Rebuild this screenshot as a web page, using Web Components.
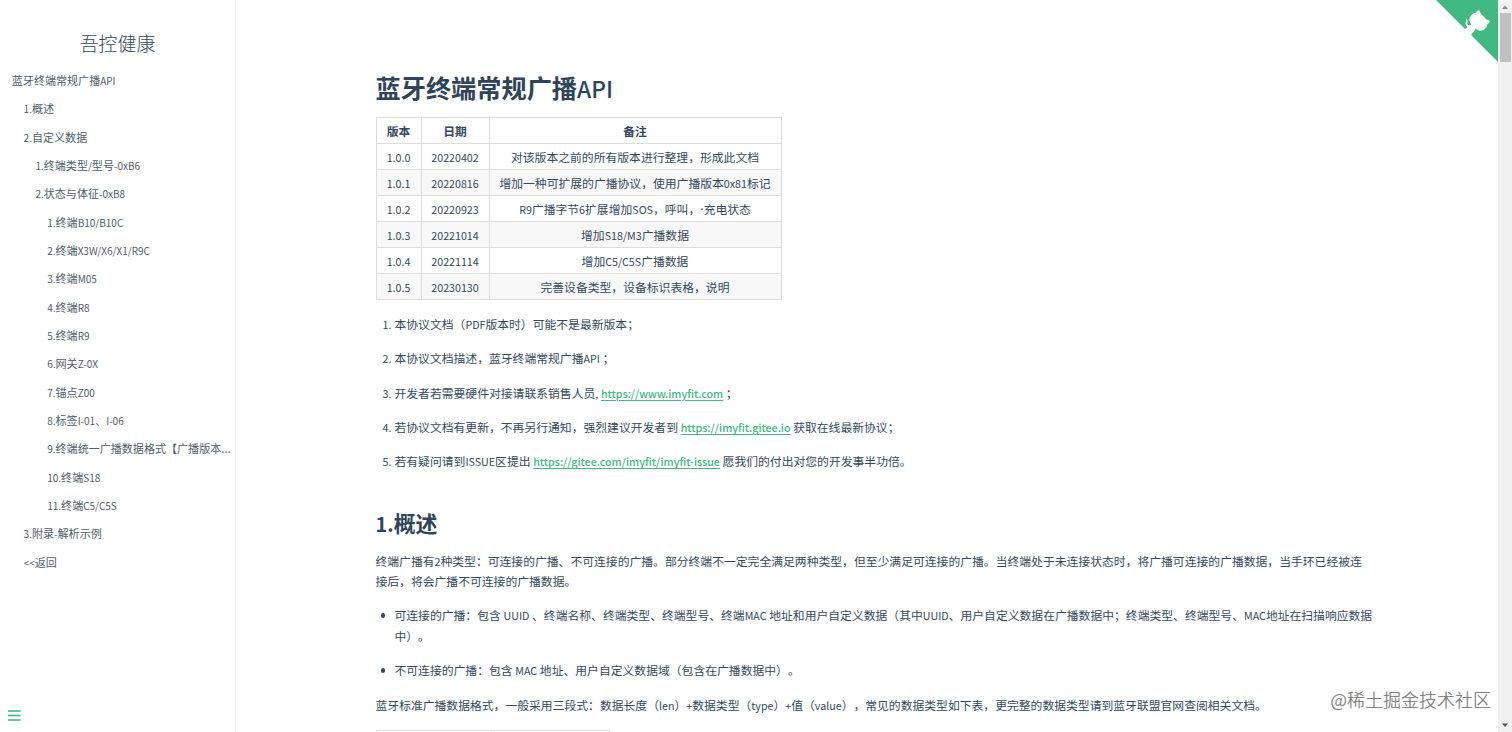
<!DOCTYPE html>
<html lang="zh-CN">
<head>
<meta charset="utf-8">
<title>蓝牙终端常规广播API</title>
<style>
html,body{margin:0;height:100%;overflow:hidden;background:#fff}
body{font-family:"Noto Sans CJK SC","Open Sans",sans-serif;text-spacing-trim:space-all;text-autospace:no-autospace;color:#34495e;font-size:11.82px}
</style>
</head>
<body>
<docs-app></docs-app>
<script>
// Western runs are set slightly smaller than the Chinese text around them.
function wrapLatin(root){
  const walker=document.createTreeWalker(root,NodeFilter.SHOW_TEXT),nodes=[];
  while(walker.nextNode())nodes.push(walker.currentNode);
  for(const n of nodes){
    const tag=n.parentNode.localName;
    if(tag==='style'||tag==='latin-run'||tag==='water-mark'||!n.data.trim())continue;
    const parts=n.data.split(/([!-~](?:[ -~]*[!-~])?|[·…])/);
    if(parts.length<2)continue;
    const frag=document.createDocumentFragment();
    parts.forEach((s,i)=>{
      if(!s)return;
      if(i%2){
        const e=document.createElement('latin-run');
        if(/[·…]/.test(s))e.setAttribute('symbol','');
        e.textContent=s;frag.append(e);
      }else frag.append(s);
    });
    n.replaceWith(frag);
  }
}
const define=(name,html,setup)=>customElements.define(name,class extends HTMLElement{
  connectedCallback(){
    if(this.shadowRoot)return;
    const t=document.createElement('template');
    t.innerHTML=html;
    wrapLatin(t.content);
    this.attachShadow({mode:'open'}).appendChild(t.content.cloneNode(true));
    if(setup)setup(this,this.shadowRoot);
  }
});

define('latin-run',`<style>
:host{display:inline;font-size:.905em;line-height:0}
:host([symbol]){font-family:"Open Sans",sans-serif;font-size:1.1em}
</style><slot></slot>`);

define('nav-item',`<style>
:host{display:block;height:28.34px;line-height:28.34px;font-size:11.05px;color:#505d6b;padding-left:calc(11.8px * var(--level,1));box-sizing:border-box}
a{display:block;overflow:hidden;white-space:nowrap}
</style><a><slot></slot></a>`,(el)=>el.style.setProperty('--level',el.getAttribute('level')));

define('menu-toggle',`<style>
:host{position:absolute;left:8px;bottom:11px;width:13px;height:11px}
svg{display:block}
</style><svg width="13" height="11" fill="#42b983"><rect width="12.6" height="1.6" y=".2"/><rect width="12.6" height="1.6" y="4.7"/><rect width="12.6" height="1.6" y="9.2"/></svg>`);

define('side-bar',`<style>
:host{display:block;position:relative;box-sizing:border-box;width:236px;height:732px;border-right:1px solid #f3f3f3;background:#fff}
h1{margin:0;padding-top:29px;height:37px;line-height:28px;font-size:18.9px;font-weight:300;text-align:center;color:#34495e}
</style><h1>吾控健康</h1>
<nav>
<nav-item level="1">蓝牙终端常规广播API</nav-item>
<nav-item level="2">1.概述</nav-item>
<nav-item level="2">2.自定义数据</nav-item>
<nav-item level="3">1.终端类型/型号-0xB6</nav-item>
<nav-item level="3">2.状态与体征-0xB8</nav-item>
<nav-item level="4">1.终端B10/B10C</nav-item>
<nav-item level="4">2.终端X3W/X6/X1/R9C</nav-item>
<nav-item level="4">3.终端M05</nav-item>
<nav-item level="4">4.终端R8</nav-item>
<nav-item level="4">5.终端R9</nav-item>
<nav-item level="4">6.网关Z-0X</nav-item>
<nav-item level="4">7.锚点Z00</nav-item>
<nav-item level="4">8.标签I-01、I-06</nav-item>
<nav-item level="4">9.终端统一广播数据格式【广播版本…</nav-item>
<nav-item level="4">10.终端S18</nav-item>
<nav-item level="4">11.终端C5/C5S</nav-item>
<nav-item level="2">3.附录-解析示例</nav-item>
<nav-item level="2">&lt;&lt;返回</nav-item>
</nav>
<menu-toggle></menu-toggle>`);

define('version-table',`<style>
:host{display:block;width:406px}
table{border-collapse:collapse;table-layout:fixed;width:406px}
th,td{box-sizing:border-box;height:26px;line-height:20px;padding:0;border:1px solid #ddd;text-align:center;white-space:nowrap;font-weight:400}
th{font-weight:700}
tbody tr:nth-child(even){background:#f8f8f8}
</style><table><colgroup><col style="width:45px"><col style="width:68px"><col></colgroup>
<thead><tr><th>版本</th><th>日期</th><th>备注</th></tr></thead>
<tbody>
<tr><td>1.0.0</td><td>20220402</td><td>对该版本之前的所有版本进行整理，形成此文档</td></tr>
<tr><td>1.0.1</td><td>20220816</td><td>增加一种可扩展的广播协议，使用广播版本0x81标记</td></tr>
<tr><td>1.0.2</td><td>20220923</td><td>R9广播字节6扩展增加SOS，呼叫，·充电状态</td></tr>
<tr><td>1.0.3</td><td>20221014</td><td>增加S18/M3广播数据</td></tr>
<tr><td>1.0.4</td><td>20221114</td><td>增加C5/C5S广播数据</td></tr>
<tr><td>1.0.5</td><td>20230130</td><td>完善设备类型，设备标识表格，说明</td></tr>
</tbody></table>`);

define('doc-link',`<style>
:host{display:inline;color:#42b983;font-weight:500;text-decoration:underline;text-decoration-thickness:1px;text-underline-offset:1.5px}
</style><slot></slot>`);

define('list-row',`<style>
:host{display:grid;grid-template-columns:19px 1fr;line-height:20.5px;margin-bottom:13.85px;white-space:nowrap}
.mark{padding-right:3px;text-align:right}
.dot{width:4.4px;height:4.4px;border-radius:50%;background:#34495e;margin:8px 0 0 5.5px}
</style><span class="mark"></span><div><slot></slot></div>`,(el,root)=>{
  const m=root.querySelector('.mark'),n=el.getAttribute('number');
  if(n){m.textContent=n+'.';wrapLatin(m)}else m.innerHTML='<div class="dot"></div>';
});

define('doc-article',`<style>
:host{display:block;flex:1;box-sizing:border-box;padding:69.5px 0 0 139.5px;height:732px;overflow:hidden}
h1,h2,p{margin:0;white-space:nowrap}
h1{font-size:25.2px;line-height:34px;margin-bottom:13.5px;color:#2f4459}
h1 span{font-weight:500}
h2{font-size:21.9px;line-height:30px;margin:35.8px 0 13.1px;color:#2f4459}
.notes{padding-top:14px}
p{line-height:20.5px;margin-bottom:13.7px}
.next{display:grid;grid-template-columns:114px 117px;gap:1px;padding:1px;width:232px;background:#ddd;height:26px;margin-top:14.6px}
.next i{background:#fff}
</style>
<h1>蓝牙终端常规广播<span>API</span></h1>
<version-table></version-table>
<div class="notes">
<list-row number="1">本协议文档（PDF版本时）可能不是最新版本；</list-row>
<list-row number="2">本协议文档描述，蓝牙终端常规广播API ；</list-row>
<list-row number="3">开发者若需要硬件对接请联系销售人员, <doc-link>https://www.imyfit.com</doc-link> ；</list-row>
<list-row number="4">若协议文档有更新，不再另行通知，强烈建议开发者到 <doc-link>https://imyfit.gitee.io</doc-link> 获取在线最新协议；</list-row>
<list-row number="5">若有疑问请到ISSUE区提出 <doc-link>https://gitee.com/imyfit/imyfit-issue</doc-link> 愿我们的付出对您的开发事半功倍。</list-row>
</div>
<h2>1.概述</h2>
<p>终端广播有2种类型：可连接的广播、不可连接的广播。部分终端不一定完全满足两种类型，但至少满足可连接的广播。当终端处于未连接状态时，将广播可连接的广播数据，当手环已经被连<br>接后，将会广播不可连接的广播数据。</p>
<list-row>可连接的广播：包含 UUID 、终端名称、终端类型、终端型号、终端MAC 地址和用户自定义数据（其中UUID、用户自定义数据在广播数据中；终端类型、终端型号、MAC地址在扫描响应数据<br>中）。</list-row>
<list-row>不可连接的广播：包含 MAC 地址、用户自定义数据域（包含在广播数据中）。</list-row>
<p>蓝牙标准广播数据格式，一般采用三段式：数据长度（len）+数据类型（type）+值（value），常见的数据类型如下表，更完整的数据类型请到蓝牙联盟官网查阅相关文档。</p>
<div class="next"><i></i><i></i></div>`);

define('github-corner',`<style>
:host{position:absolute;top:0;right:14px;width:62.5px;height:62.5px}
svg{display:block;width:62.5px;height:62.5px}
</style><svg viewBox="0 0 250 250"><path fill="#42b983" d="M0,0 L115,115 L130,115 L142,142 L250,250 L250,0 Z"/><path fill="#fff" d="M128.3,109.0 C113.8,99.7 119.0,89.6 119.0,89.6 C122.0,82.7 120.5,78.6 120.5,78.6 C119.2,72.0 123.4,76.3 123.4,76.3 C127.3,80.9 125.5,87.3 125.5,87.3 C122.9,97.6 130.6,101.9 134.4,103.2"/><path fill="#fff" d="M115.0,115.0 C114.9,115.1 118.7,116.5 119.8,115.4 L133.7,101.6 C136.9,99.2 139.9,98.4 142.2,98.6 C133.8,88.0 127.5,74.4 143.8,58.0 C148.5,53.4 154.0,51.2 159.7,51.0 C160.3,49.4 163.2,43.6 171.4,40.1 C171.4,40.1 176.1,42.5 178.8,56.2 C183.1,58.6 187.2,61.8 190.9,65.4 C194.5,69.0 197.7,73.2 200.1,77.6 C213.8,80.2 216.3,84.9 216.3,84.9 C212.7,93.1 206.9,96.0 205.4,96.6 C205.1,102.4 203.0,107.8 198.3,112.5 C181.9,128.9 168.3,122.5 157.7,114.1 C157.9,116.9 156.7,120.9 152.7,124.9 L141.0,136.5 C139.8,137.7 141.6,141.9 141.8,141.8 Z"/></svg>`);

define('scroll-bar',`<style>
:host{display:flex;flex-direction:column;align-items:center;width:14px;height:732px;background:#f1f1f1}
svg{width:14px;height:13px;flex:none}
i{width:11px;height:49px;background:#c1c1c1}
b{flex:1}
</style><svg viewBox="0 0 14 13"><path d="M4 9h6L7 5.5z" fill="#8b8b8b"/></svg><i></i><b></b><svg viewBox="0 0 14 13"><path d="M4 4.5h6L7 8z" fill="#505050"/></svg>`);

define('water-mark',`<style>
:host{position:absolute;right:21px;bottom:20px;font-size:18px;line-height:26px;font-weight:300;color:#777;white-space:nowrap;text-shadow:0 0 1px #bbb}
</style><slot></slot>`);

define('docs-app',`<style>
:host{display:flex;position:relative;width:1512px;height:732px;overflow:hidden;background:#fff}
</style><side-bar></side-bar><doc-article></doc-article><scroll-bar></scroll-bar><github-corner></github-corner><water-mark>@稀土掘金技术社区</water-mark>`);
</script>
</body>
</html>
